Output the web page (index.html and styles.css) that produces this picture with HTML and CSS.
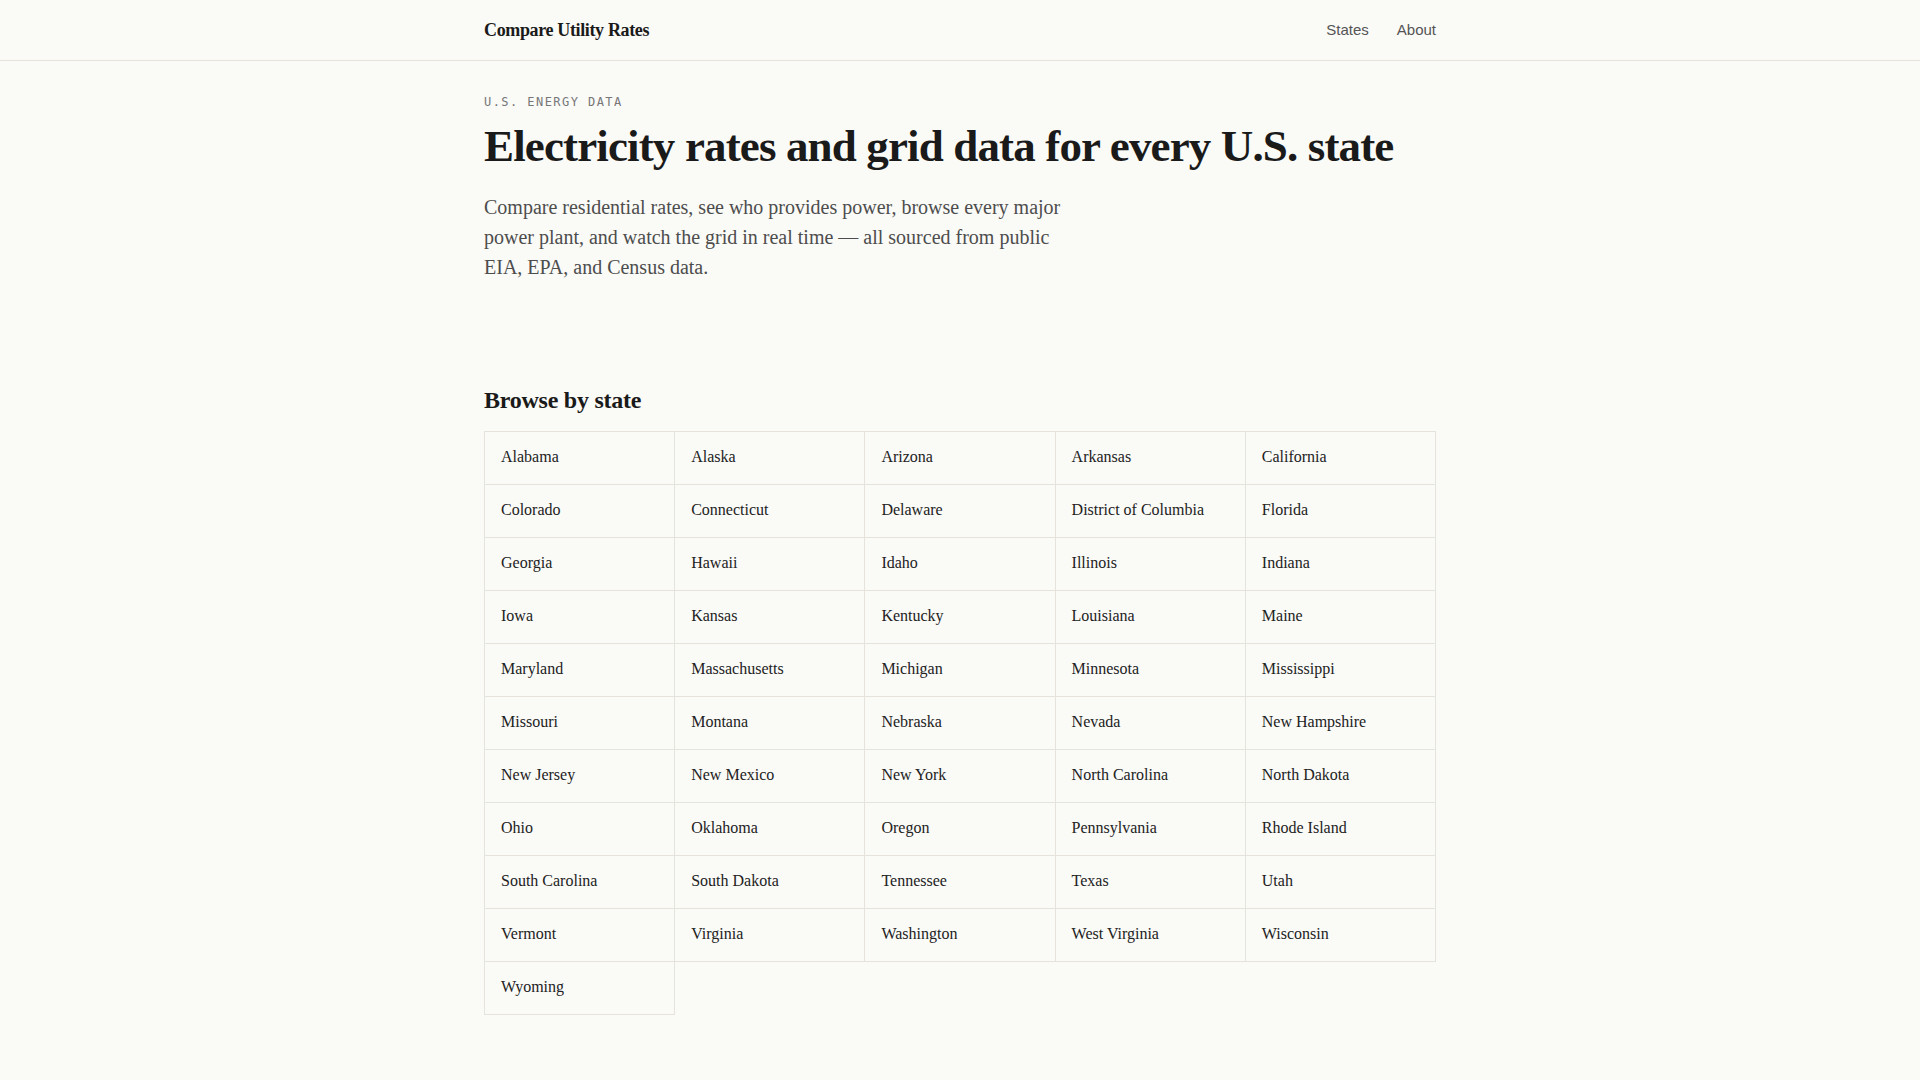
FILE: index.html
```html
<!DOCTYPE html>
<html lang="en">
<head>
<meta charset="utf-8">
<title>Compare Utility Rates</title>
<link rel="stylesheet" href="styles.css">
</head>
<body>
<header class="site-header">
  <div class="wrap header-inner">
    <a class="brand" href="#">Compare Utility Rates</a>
    <nav class="nav">
      <a href="#">States</a>
      <a href="#">About</a>
    </nav>
  </div>
</header>
<main class="wrap main">
  <section class="hero">
    <p class="eyebrow">U.S. ENERGY DATA</p>
    <h1 class="title">Electricity rates and grid data for every U.S. state</h1>
    <p class="lede">Compare residential rates, see who provides power, browse every major power plant, and watch the grid in real time — all sourced from public EIA, EPA, and Census data.</p>
  </section>
  <section class="states">
    <h2 class="section-title">Browse by state</h2>
    <div class="state-grid">
      <a class="state" href="#">Alabama</a>
      <a class="state" href="#">Alaska</a>
      <a class="state" href="#">Arizona</a>
      <a class="state" href="#">Arkansas</a>
      <a class="state" href="#">California</a>
      <a class="state" href="#">Colorado</a>
      <a class="state" href="#">Connecticut</a>
      <a class="state" href="#">Delaware</a>
      <a class="state" href="#">District of Columbia</a>
      <a class="state" href="#">Florida</a>
      <a class="state" href="#">Georgia</a>
      <a class="state" href="#">Hawaii</a>
      <a class="state" href="#">Idaho</a>
      <a class="state" href="#">Illinois</a>
      <a class="state" href="#">Indiana</a>
      <a class="state" href="#">Iowa</a>
      <a class="state" href="#">Kansas</a>
      <a class="state" href="#">Kentucky</a>
      <a class="state" href="#">Louisiana</a>
      <a class="state" href="#">Maine</a>
      <a class="state" href="#">Maryland</a>
      <a class="state" href="#">Massachusetts</a>
      <a class="state" href="#">Michigan</a>
      <a class="state" href="#">Minnesota</a>
      <a class="state" href="#">Mississippi</a>
      <a class="state" href="#">Missouri</a>
      <a class="state" href="#">Montana</a>
      <a class="state" href="#">Nebraska</a>
      <a class="state" href="#">Nevada</a>
      <a class="state" href="#">New Hampshire</a>
      <a class="state" href="#">New Jersey</a>
      <a class="state" href="#">New Mexico</a>
      <a class="state" href="#">New York</a>
      <a class="state" href="#">North Carolina</a>
      <a class="state" href="#">North Dakota</a>
      <a class="state" href="#">Ohio</a>
      <a class="state" href="#">Oklahoma</a>
      <a class="state" href="#">Oregon</a>
      <a class="state" href="#">Pennsylvania</a>
      <a class="state" href="#">Rhode Island</a>
      <a class="state" href="#">South Carolina</a>
      <a class="state" href="#">South Dakota</a>
      <a class="state" href="#">Tennessee</a>
      <a class="state" href="#">Texas</a>
      <a class="state" href="#">Utah</a>
      <a class="state" href="#">Vermont</a>
      <a class="state" href="#">Virginia</a>
      <a class="state" href="#">Washington</a>
      <a class="state" href="#">West Virginia</a>
      <a class="state" href="#">Wisconsin</a>
      <a class="state" href="#">Wyoming</a>
    </div>
  </section>
</main>
</body>
</html>
```
FILE: styles.css
```css
* { box-sizing: border-box; }

html, body {
  margin: 0;
  padding: 0;
  background: #fafaf7;
  color: #1a1a1a;
  font-family: "Liberation Serif", "Times New Roman", serif;
}

a { text-decoration: none; color: inherit; }

.wrap {
  max-width: 1000px;
  margin: 0 auto;
  padding: 0 24px;
}

.site-header {
  border-bottom: 1px solid #e6e3dd;
}

.header-inner {
  height: 60px;
  display: flex;
  align-items: center;
  justify-content: space-between;
}

.brand {
  font-size: 18px;
  font-weight: 700;
  letter-spacing: -0.02em;
  color: #1a1a1a;
}

.nav {
  display: flex;
  gap: 28px;
  padding-bottom: 2px;
  font-family: "Liberation Sans", Arial, sans-serif;
  font-size: 15px;
}

.nav a { color: #555; }

.main {
  padding-top: 32px;
  padding-bottom: 60px;
}

.eyebrow {
  margin: 0;
  font-family: "DejaVu Sans Mono", monospace;
  font-size: 12px;
  line-height: 18px;
  letter-spacing: 0.12em;
  color: #777;
}

.title {
  margin: 10px 0 0;
  font-size: 45px;
  line-height: 50px;
  font-weight: 700;
  letter-spacing: -0.019em;
  color: #1a1a1a;
}

.lede {
  margin: 21px 0 0;
  max-width: 600px;
  font-size: 20px;
  line-height: 30px;
  color: #4d4d4d;
}

.section-title {
  margin: 104px 0 0;
  font-size: 24px;
  line-height: 28px;
  font-weight: 700;
  letter-spacing: -0.01em;
  color: #1a1a1a;
}

.state-grid {
  margin-top: 17px;
  display: grid;
  grid-template-columns: repeat(5, 1fr);
  border-top: 1px solid #e6e3dd;
  border-left: 1px solid #e6e3dd;
}

.state {
  display: block;
  padding: 13px 16px 15px;
  font-size: 16px;
  line-height: 24px;
  color: #222;
  border-right: 1px solid #e6e3dd;
  border-bottom: 1px solid #e6e3dd;
}
```
